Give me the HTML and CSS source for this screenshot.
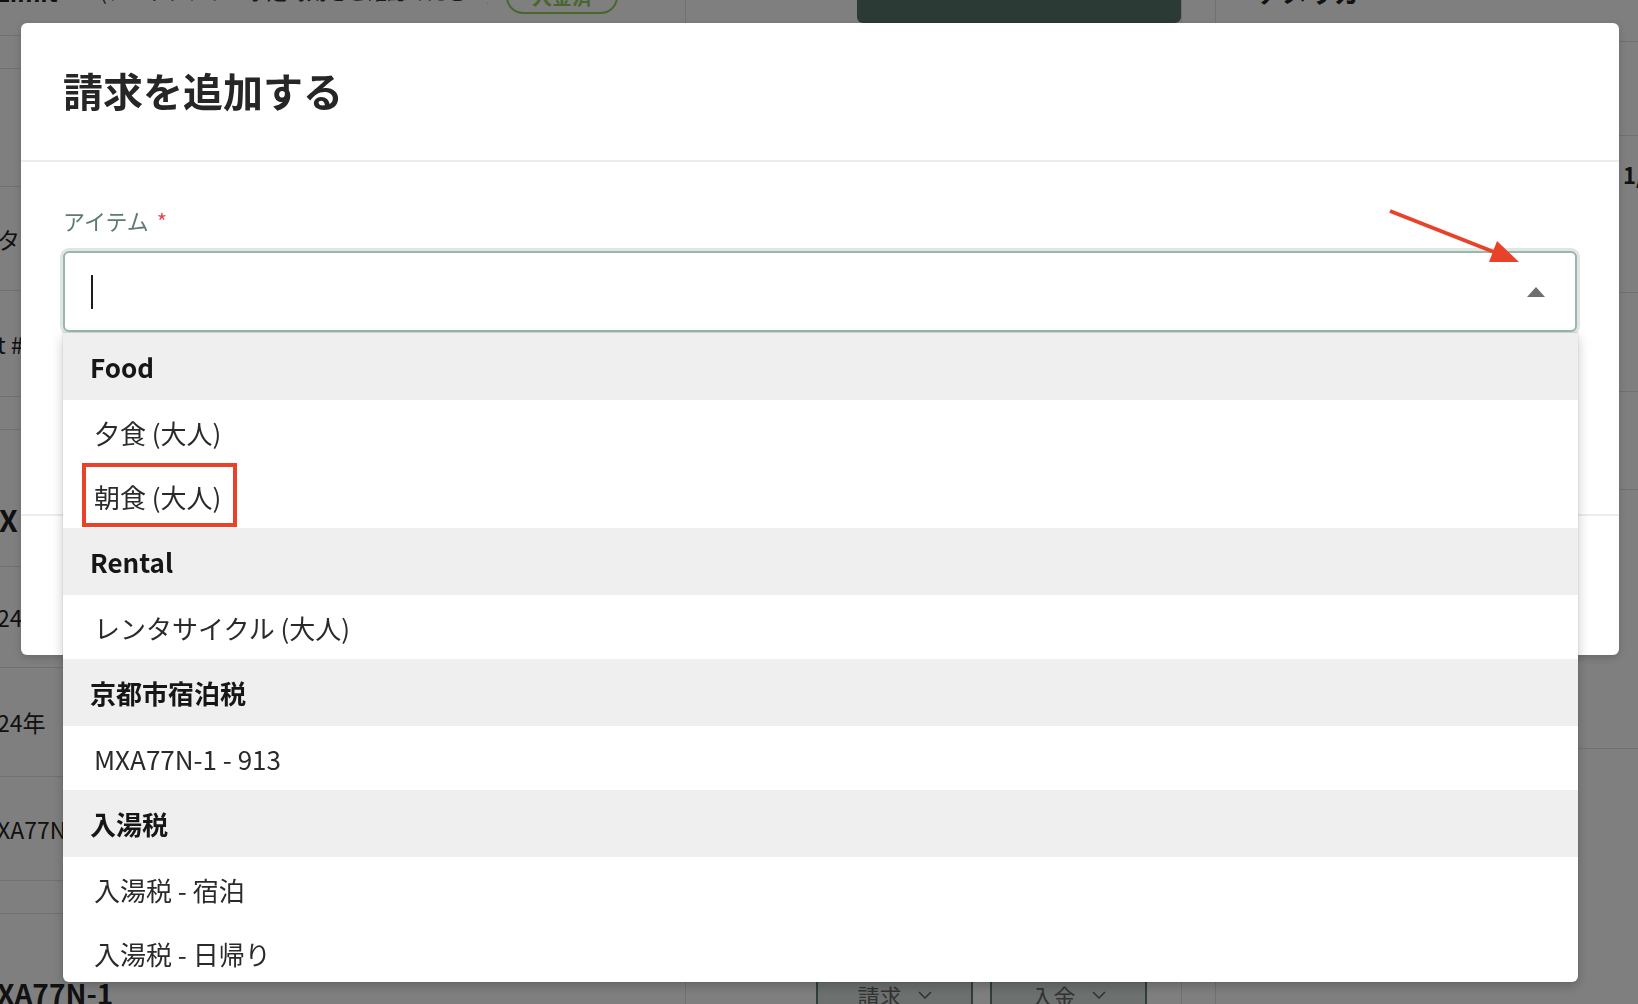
FILE: index.html
```html
<!DOCTYPE html>
<html lang="ja">
<head>
<meta charset="utf-8">
<title>請求を追加する</title>
<link rel="stylesheet" href="styles.css">
</head>
<body>
<div class="page">
  <div class="page-grid">
    <div class="col col-main">
      <div class="row r-top">
        <span class="top-title">Limit</span>
        <span class="top-note">(チェックアウト予定時刻をご確認ください)</span>
        <span class="badge">入金済</span>
      </div>
      <div class="row h33"></div>
      <div class="row h118"></div>
      <div class="row h104"><span class="cell">タ</span></div>
      <div class="row h106"><span class="cell">t #</span></div>
      <div class="row h33"></div>
      <div class="row h137 row-heading"><span class="cell heading heading-cut">XA77N-1</span></div>
      <div class="row h101"><span class="cell">24</span></div>
      <div class="row h109"><span class="cell">24年</span></div>
      <div class="row h104"><span class="cell">XA77N-1</span></div>
      <div class="row h33"></div>
      <div class="row row-last"><span class="cell heading">XA77N-1</span></div>
    </div>
    <div class="col col-mid">
      <div class="mid-top"><span class="dark-btn">請求書を発行する</span></div>
      <div class="mid-bottom">
        <span class="ghost-btn">請求 <svg class="chev" viewBox="0 0 14 8"><polyline points="1,1 7,7 13,1" fill="none" stroke="currentColor" stroke-width="1.6"/></svg></span>
        <span class="ghost-btn">入金 <svg class="chev" viewBox="0 0 14 8"><polyline points="1,1 7,7 13,1" fill="none" stroke="currentColor" stroke-width="1.6"/></svg></span>
      </div>
    </div>
    <div class="col col-narrow"></div>
    <div class="col col-right">
      <div class="row rr1"><span class="right-title">アメリカ</span></div>
      <div class="row rr2"></div>
      <div class="row rr3"><span class="right-cell">1/1</span></div>
      <div class="row rr4"></div>
      <div class="row rr5"></div>
      <div class="row rr6"></div>
    </div>
  </div>
</div>

<div class="overlay"></div>

<div class="modal">
  <div class="modal-header">
    <h2 class="modal-title">請求を追加する</h2>
  </div>
  <div class="modal-body">
    <div class="field-label">アイテム<span class="req">*</span></div>
    <div class="select">
      <div class="select-input">
        <span class="caret"></span>
        <svg class="arrow-up" viewBox="0 0 18 10"><polygon points="9,0 18,10 0,10" fill="#6e6e6e"/></svg>
      </div>
      <div class="menu">
        <div class="group">Food</div>
        <div class="option">夕食 (大人)</div>
        <div class="option">朝食 (大人)<span class="mark"></span></div>
        <div class="group">Rental</div>
        <div class="option">レンタサイクル (大人)</div>
        <div class="group">京都市宿泊税</div>
        <div class="option">MXA77N-1 - 913</div>
        <div class="group">入湯税</div>
        <div class="option">入湯税 - 宿泊</div>
        <div class="option">入湯税 - 日帰り</div>
      </div>
    </div>
  </div>
  <div class="modal-footer"></div>
</div>

<svg class="annot-arrow" viewBox="0 0 150 70" width="150" height="70">
  <line x1="10" y1="11" x2="114" y2="52" stroke="#e8432a" stroke-width="4"/>
  <polygon points="139,62 109,62 117,41" fill="#e8432a"/>
</svg>
</body>
</html>
```

FILE: styles.css
```css
* { box-sizing: border-box; }
html, body { margin: 0; padding: 0; }
body {
  width: 1638px;
  height: 1004px;
  overflow: hidden;
  position: relative;
  background: #fff;
  font-family: "Noto Sans CJK JP", "Noto Sans", sans-serif;
  color: #222;
}

/* ---------- underlying page ---------- */
.page { height: 1004px; overflow: hidden; background: #fff; }
.page-grid {
  display: grid;
  grid-template-columns: 686px 496px 34px 1fr;
  height: 1060px;
  margin-top: -30px;
}
.col {
  display: flex;
  flex-direction: column;
  border-right: 1px solid #e2e2e2;
  min-width: 0;
}
.col-right { border-right: 0; }
.row {
  flex-shrink: 0;
  display: flex;
  align-items: center;
  border-bottom: 1px solid #e2e2e2;
  white-space: nowrap;
  overflow: hidden;
}
.r-top { height: 66px; padding-bottom: 22px; gap: 18px; }
.h33 { height: 33px; }
.h101 { height: 101px; }
.h104 { height: 104px; }
.h106 { height: 106px; }
.h109 { height: 109px; }
.h118 { height: 118px; }
.h137 { height: 137px; }
.row-heading { align-items: flex-start; padding-top: 69px; }
.row-last { flex: 1; border-bottom: 0; align-items: flex-start; padding-top: 59px; }

.top-title { font-size: 24px; font-weight: 700; margin-left: -4px; width: 86px; flex-shrink: 0; }
.top-note {
  font-size: 20px;
  color: #333;
  width: 388px;
  flex-shrink: 0;
  overflow: hidden;
}
.badge {
  flex-shrink: 0;
  width: 112px;
  height: 34px;
  margin-top: 10px;
  border: 2px solid #8fcf5f;
  border-radius: 17px;
  color: #8fcf5f;
  font-size: 20px;
  font-weight: 700;
  display: flex;
  align-items: center;
  justify-content: center;
}
.cell { font-size: 23px; line-height: 32px; margin-left: -3px; color: #222; }
.heading { font-size: 28px; line-height: 40px; font-weight: 700; }
.heading-cut { margin-left: -1px; font-size: 30px; letter-spacing: 8px; }

.col-mid { justify-content: space-between; padding-bottom: 15px; }
.mid-top { height: 53px; display: flex; justify-content: flex-end; }
.dark-btn {
  width: 324px;
  height: 53px;
  background: #58746a;
  color: #f4f4f4;
  border-radius: 0 0 6px 6px;
  font-size: 22px;
  display: flex;
  align-items: flex-end;
  justify-content: center;
  padding-bottom: 26px;
}
.mid-bottom { display: flex; justify-content: flex-end; gap: 17px; padding-right: 34px; }
.ghost-btn {
  width: 157px;
  height: 40px;
  border: 2px solid #5e7e72;
  background: #d8e3de;
  color: #666;
  font-size: 22px;
  display: flex;
  align-items: center;
  justify-content: center;
  gap: 16px;
}
.chev { width: 14px; height: 8px; }

.rr1 { height: 72px; align-items: flex-start; padding: 3px 0 0 41px; }
.rr2 { height: 94px; }
.rr3 { height: 157px; align-items: flex-start; padding: 22px 0 0 407px; }
.rr4 { height: 99px; }
.rr5 { height: 98px; }
.rr6 { height: 259px; }
.right-title { font-size: 26px; font-weight: 700; }
.right-cell { font-size: 22px; line-height: 32px; font-weight: 700; }

/* ---------- overlay + modal ---------- */
.overlay { position: fixed; inset: 0; background: rgba(0, 0, 0, 0.5); }

.modal {
  position: fixed;
  left: 21px;
  top: 23px;
  width: 1598px;
  height: 632px;
  background: #fff;
  border-radius: 6px;
  box-shadow: 0 3px 8px rgba(0, 0, 0, 0.18);
  display: flex;
  flex-direction: column;
}
.modal-header {
  height: 139px;
  flex-shrink: 0;
  border-bottom: 2px solid #ededed;
  display: flex;
  align-items: center;
  padding: 0 42px 4px;
}
.modal-title {
  margin: 0;
  font-size: 40px;
  line-height: 48px;
  font-weight: 700;
  color: #262626;
}
.modal-body { height: 352px; flex-shrink: 0; padding: 42px 42px 0; }
.field-label {
  display: flex;
  align-items: baseline;
  font-size: 22px;
  line-height: 32px;
  color: #5d7b71;
}
.req { color: #e5484d; margin-left: 8px; }

.select { position: relative; margin-top: 15px; }
.select-input {
  height: 81px;
  background: #fff;
  border: 2px solid #9cb6ab;
  border-radius: 6px;
  box-shadow: 0 0 0 3px #dfe7e3;
  display: flex;
  align-items: center;
  justify-content: space-between;
  padding: 0 30px 0 26px;
}
.caret { width: 2px; height: 34px; background: #1d1d1d; }
.arrow-up { width: 18px; height: 10px; display: block; }

.menu {
  position: absolute;
  left: 0;
  right: -1px;
  top: calc(100% + 1px);
  height: 649px;
  overflow: hidden;
  background: #fff;
  border-radius: 0 0 6px 6px;
  box-shadow: 0 4px 12px rgba(0, 0, 0, 0.22), 0 0 0 1px rgba(0, 0, 0, 0.04);
  z-index: 2;
}
.group {
  height: 67px;
  background: #efefef;
  display: flex;
  align-items: center;
  padding-left: 27px;
  font-size: 26px;
  font-weight: 700;
  color: #161616;
}
.option {
  position: relative;
  height: 64px;
  display: flex;
  align-items: center;
  padding-left: 31px;
  font-size: 26px;
  color: #2a2a2a;
}
.mark {
  position: absolute;
  left: 19px;
  top: -1px;
  width: 155px;
  height: 64px;
  border: 4px solid #e8432a;
}
.modal-footer { flex: 1; border-top: 2px solid #ededed; }

.annot-arrow { position: absolute; left: 1380px; top: 200px; }
```
